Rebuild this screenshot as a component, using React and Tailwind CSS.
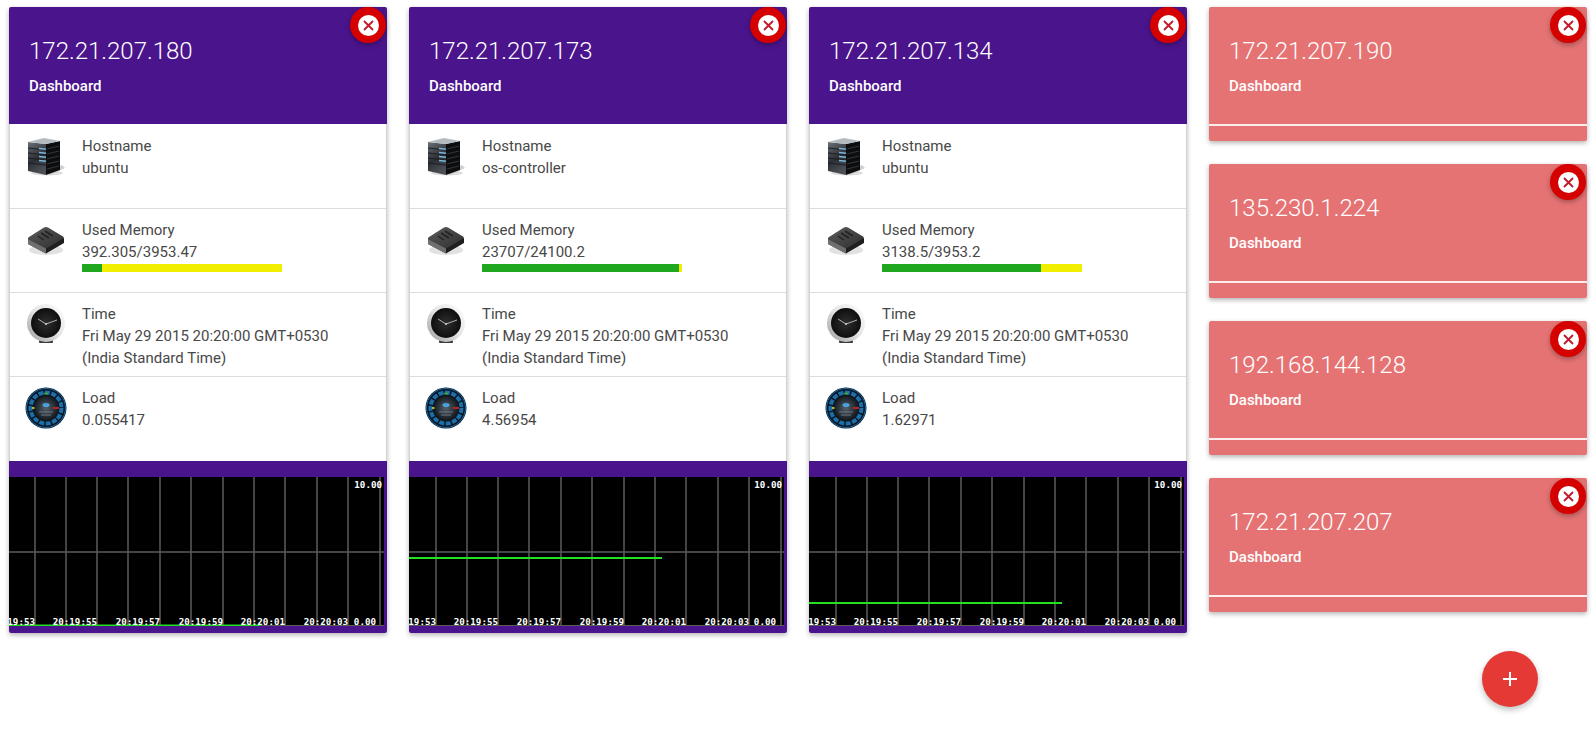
import React from "react";

const hosts = [
  {
    ip: "172.21.207.180",
    hostname: "ubuntu",
    memory: "392.305/3953.47",
    used: 20,
    load: "0.055417",
    lineY: 148.5,
    lineEnd: 251,
    gridShift: 0,
  },
  {
    ip: "172.21.207.173",
    hostname: "os-controller",
    memory: "23707/24100.2",
    used: 197,
    load: "4.56954",
    lineY: 81,
    lineEnd: 253,
    gridShift: 1,
  },
  {
    ip: "172.21.207.134",
    hostname: "ubuntu",
    memory: "3138.5/3953.2",
    used: 159,
    load: "1.62971",
    lineY: 126,
    lineEnd: 253,
    gridShift: 1,
  },
];

const downHosts = ["172.21.207.190", "135.230.1.224", "192.168.144.128", "172.21.207.207"];

const gridX = [26, 57, 88, 119, 151, 182, 214, 245, 276, 308, 339, 371];
const timeLabels = [
  ["19:53", 26],
  ["20:19:55", 88],
  ["20:19:57", 151],
  ["20:19:59", 214],
  ["20:20:01", 276],
  ["20:20:03", 339],
];

function ServerIcon() {
  return (
    <svg width="40" height="42" viewBox="0 0 40 42">
      <defs>
        <linearGradient id="serverLeft" x1="0" y1="0" x2="0.3" y2="1">
          <stop offset="0" stopColor="#6a7078" />
          <stop offset="0.6" stopColor="#2b2e33" />
          <stop offset="1" stopColor="#4b4f55" />
        </linearGradient>
      </defs>
      <ellipse cx="21" cy="38" rx="16" ry="2.5" fill="#dcdcdc" />
      <path d="M36 30 L39 33 L24 40 L20 38 Z" fill="#d0d0d0" />
      <path d="M2 7 L20 9 L20 40 L2 36 Z" fill="url(#serverLeft)" />
      <path d="M20 9 L34 6 L34 35 L20 40 Z" fill="#0c0d0f" />
      <path d="M2 7 L18 3 L34 6 L20 9 Z" fill="#b4bac0" />
      <path d="M2 13 L20 15 M2 18 L20 20 M2 23 L20 25 M2 28 L20 30" stroke="#1c1e22" strokeWidth="1" />
      <path d="M13 13.5 L20 14.3 M13 17.5 L20 18.3 M13 21.5 L20 22.3 M13 25.5 L20 26.3" stroke="#79b7dc" strokeWidth="1.6" />
      <path d="M21 14 L33 11 M21 19 L33 16 M21 24 L33 21 M21 29 L33 26 M21 34 L33 31" stroke="#34373c" strokeWidth="1" />
    </svg>
  );
}

function MemoryIcon() {
  return (
    <svg width="40" height="38" viewBox="0 0 40 38">
      <defs>
        <linearGradient id="memoryTop" x1="0" y1="0" x2="1" y2="1">
          <stop offset="0" stopColor="#5a5a5a" />
          <stop offset="1" stopColor="#2f2f2f" />
        </linearGradient>
      </defs>
      <ellipse cx="20" cy="31" rx="17" ry="5" fill="#e2e2e2" />
      <path d="M2 20 L2 25 L20 34.5 L38 24 L38 19 Z" fill="#1f1f1f" />
      <path d="M2 20 L2 25 L20 34.5 L20 29 Z" fill="#6f6f6f" />
      <path d="M2 20 Q1.5 19 3 18 L18 8.5 Q20 7.5 22 8.5 L37 17.5 Q38.5 18.5 37 19.5 L21 29 Q20 29.5 19 29 Z" fill="url(#memoryTop)" />
      <path d="M15 14 L23 19 M19 12 L27 17 M12 17 L18 21" stroke="#222222" strokeWidth="1.5" />
    </svg>
  );
}

function ClockIcon() {
  return (
    <svg width="40" height="42" viewBox="0 0 40 42">
      <defs>
        <linearGradient id="clockRing" x1="1" y1="0" x2="0" y2="1">
          <stop offset="0" stopColor="#ffffff" />
          <stop offset="0.5" stopColor="#e4e4e4" />
          <stop offset="1" stopColor="#9a9a9a" />
        </linearGradient>
        <radialGradient id="clockFace">
          <stop offset="0" stopColor="#2e2e2e" />
          <stop offset="1" stopColor="#0e0e0e" />
        </radialGradient>
      </defs>
      <rect x="13" y="37" width="14" height="3" rx="1" fill="#3a3a3a" />
      <circle cx="20" cy="20" r="19" fill="url(#clockRing)" />
      <circle cx="20" cy="20" r="15" fill="url(#clockFace)" />
      <path d="M20 21 L12 16 M20 21 L31 17" stroke="#d4d4d4" strokeWidth="0.8" />
      <circle cx="20" cy="21" r="1" fill="#cfcfcf" />
    </svg>
  );
}

function GaugeIcon() {
  return (
    <svg width="42" height="42" viewBox="0 0 42 42">
      <defs>
        <radialGradient id="gaugeHub">
          <stop offset="0" stopColor="#55616b" />
          <stop offset="1" stopColor="#10151a" />
        </radialGradient>
      </defs>
      <circle cx="21" cy="21" r="20.5" fill="#071726" />
      <circle cx="21" cy="21" r="19.5" fill="none" stroke="#1d6aa3" strokeWidth="1" />
      <circle cx="21" cy="21" r="15.5" fill="none" stroke="#1f6ea8" strokeWidth="4" strokeDasharray="5 1.5" />
      <circle cx="21" cy="21" r="13" fill="url(#gaugeHub)" />
      <ellipse cx="21" cy="18" rx="3.5" ry="2" fill="#4aa3dc" />
      <path d="M14 25 H28 M16 28 H26" stroke="#7d8891" strokeWidth="0.8" />
      <path d="M19 6.5 H23" stroke="#3ea83e" strokeWidth="1.8" />
      <path d="M28 21 H34" stroke="#c62828" strokeWidth="1.8" />
      <path d="M7 21 H9.5" stroke="#c8c830" strokeWidth="1.8" />
    </svg>
  );
}

function CloseButton() {
  return (
    <button className="absolute top-0 right-[1px] w-9 h-9 rounded-full bg-[#d50000] flex items-center justify-center shadow-[0_2px_5px_rgba(0,0,0,0.3)]">
      <span className="w-[21px] h-[21px] rounded-full bg-white flex items-center justify-center">
        <svg width="11" height="11" viewBox="0 0 11 11">
          <path d="M1 1 L10 10 M10 1 L1 10" stroke="#c2182b" strokeWidth="1.8" />
        </svg>
      </span>
    </button>
  );
}

function CardHeader({ ip }) {
  return (
    <div className="h-[117px] pt-[28px] pl-[20px]">
      <h1 className="text-2xl leading-8 font-light text-white">{ip}</h1>
      <p className="mt-[9px] text-[15px] leading-5 font-medium text-white">Dashboard</p>
    </div>
  );
}

function InfoRow({ icon, label, children, first, last }) {
  return (
    <div
      className={`flex ${first ? "h-[84px] pt-[11px]" : "border-t border-[#dddddd] pt-[10px]"} ${
        last ? "h-[85px]" : "h-[84px]"
      }`}
    >
      <div className="w-[72px] flex justify-center shrink-0">{icon}</div>
      <div className="text-[15px] leading-[22px] text-[#484848]">
        <div>{label}</div>
        {children}
      </div>
    </div>
  );
}

function Chart({ lineY, lineEnd, gridShift }) {
  return (
    <svg width="375" height="149" viewBox="0 0 375 149" className="block">
      <rect width="375" height="149" fill="#000000" />
      {gridX.map((x) => (
        <line key={x} x1={x + gridShift} x2={x + gridShift} y1="0" y2="149" stroke="#5c5c5c" strokeWidth="1.5" />
      ))}
      <line x1="0" x2="375" y1="75" y2="75" stroke="#5c5c5c" strokeWidth="1.5" />
      <line x1="0" x2="375" y1="148.5" y2="148.5" stroke="#5c5c5c" strokeWidth="1" />
      <line x1="0" x2={lineEnd} y1={lineY} y2={lineY} stroke="#22e022" strokeWidth="2" />
      <g fill="#ffffff" fontSize="9.2" fontWeight="700" fontFamily="'DejaVu Sans Mono', monospace">
        {timeLabels.map(([text, x]) => (
          <text key={text} x={x + gridShift} y="148" textAnchor="end">
            {text}
          </text>
        ))}
        <text x="367" y="148" textAnchor="end">0.00</text>
        <text x="373" y="11" textAnchor="end">10.00</text>
      </g>
    </svg>
  );
}

function HostCard({ host }) {
  return (
    <div className="relative w-[378px] rounded-[2px] shadow-[0_2px_5px_rgba(0,0,0,0.3)]">
      <CloseButton />
      <div className="bg-[#4a148c] rounded-t-[2px]">
        <CardHeader ip={host.ip} />
      </div>
      <div className="bg-white border-x border-[#d4d4d4]">
        <InfoRow icon={<ServerIcon />} label="Hostname" first>
          <div>{host.hostname}</div>
        </InfoRow>
        <InfoRow icon={<MemoryIcon />} label="Used Memory">
          <div>{host.memory}</div>
          <div className="mt-[1px] w-[200px] h-2 bg-[#f2ee00]">
            <div className="h-full bg-[#1fa71f]" style={{ width: host.used }} />
          </div>
        </InfoRow>
        <InfoRow icon={<ClockIcon />} label="Time">
          <div>Fri May 29 2015 20:20:00 GMT+0530</div>
          <div>(India Standard Time)</div>
        </InfoRow>
        <InfoRow icon={<GaugeIcon />} label="Load" last>
          <div>{host.load}</div>
        </InfoRow>
      </div>
      <div className="bg-[#4a148c] pt-[16px] pb-[7px] rounded-b-[2px]">
        <Chart lineY={host.lineY} lineEnd={host.lineEnd} gridShift={host.gridShift} />
      </div>
    </div>
  );
}

function DownCard({ ip }) {
  return (
    <div className="relative w-[378px] rounded-[2px] bg-[#e57373] shadow-[0_2px_5px_rgba(0,0,0,0.3)]">
      <CloseButton />
      <CardHeader ip={ip} />
      <div className="h-[17px] border-t-2 border-[#fdeeee]" />
    </div>
  );
}

export default function App() {
  return (
    <div className="relative min-h-[735px] bg-white font-['Roboto',sans-serif] flex items-start gap-[22px] pl-[9px] pt-[7px]">
      {hosts.map((host) => (
        <HostCard key={host.ip} host={host} />
      ))}
      <div className="flex flex-col gap-[23px]">
        {downHosts.map((ip) => (
          <DownCard key={ip} ip={ip} />
        ))}
      </div>
      <button className="absolute left-[1482px] top-[651px] w-14 h-14 rounded-full bg-[#e53935] flex items-center justify-center shadow-[0_3px_6px_rgba(0,0,0,0.25)]">
        <svg width="14" height="14" viewBox="0 0 14 14">
          <path d="M7 0 V14 M0 7 H14" stroke="#ffffff" strokeWidth="2" />
        </svg>
      </button>
    </div>
  );
}
